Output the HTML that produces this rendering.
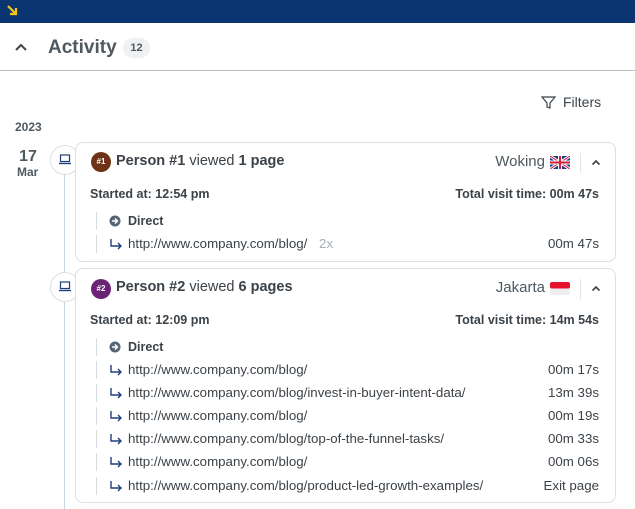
<!DOCTYPE html><html><head><style>
*{margin:0;padding:0;box-sizing:border-box}
body{width:635px;height:509px;overflow:hidden;background:#fff;font-family:"Liberation Sans",sans-serif;color:#3b4248;position:relative}
.a{position:absolute;white-space:nowrap}
.card{position:absolute;left:75px;width:541px;border:1px solid #dcdfe2;border-radius:8px;background:#fff;z-index:2}
.av{position:absolute;width:20px;height:20px;border-radius:50%;color:#fff;font-size:8px;font-weight:bold;text-align:center;line-height:20px}
.dev{position:absolute;left:50px;width:30px;height:30px;border-radius:50%;border:1px solid #dcdfe2;background:#fff;z-index:1}
.row{position:absolute;left:20px;right:16px;height:18px;font-size:13.3px;line-height:18px}
.row .bar{position:absolute;left:0;top:0;width:1px;height:18px;background:#d9dcdf}
.row .ic{position:absolute;left:13px;top:0}
.row .t{position:absolute;left:32px;color:#3b4248}
.row .r{position:absolute;right:0;color:#3b4248}
</style></head><body>
<div class="a" style="left:0;top:0;width:635px;height:23px;background:#0a3570"></div>
<svg class="a" style="left:6px;top:4px" width="13" height="13" viewBox="0 0 13 13"><path d="M2 2L10 10M4 10H10V4" stroke="#f5c518" stroke-width="2.2" fill="none"/></svg>
<svg class="a" style="left:14px;top:42px" width="14" height="10" viewBox="0 0 14 10"><path d="M2 8L7 3L12 8" stroke="#3b4248" stroke-width="2" fill="none"/></svg>
<div class="a" style="left:48px;top:37px;font-size:19px;font-weight:bold;color:#4f5960">Activity</div>
<div class="a" style="left:123px;top:38px;width:27px;height:20px;border-radius:10px;background:#eef0f1;font-size:11px;font-weight:bold;text-align:center;line-height:20px;color:#4f5960">12</div>
<div class="a" style="left:0;top:70px;width:635px;height:1px;background:#b9c1c6"></div>
<svg class="a" style="left:541px;top:95px" width="15" height="15" viewBox="0 0 15 15"><path d="M1 2H14L9 8V13L6 12V8Z" stroke="#3b4248" stroke-width="1.2" fill="none"/></svg>
<div class="a" style="left:563px;top:94px;font-size:14px;color:#3b4248">Filters</div>
<div class="a" style="left:15px;top:120px;font-size:12px;font-weight:bold;color:#4f5960">2023</div>
<div class="a" style="left:17px;top:148px;font-size:16px;font-weight:bold;color:#4f5960;width:22px;text-align:center">17</div>
<div class="a" style="left:17px;top:165px;font-size:12px;font-weight:bold;color:#4f5960">Mar</div>
<div class="a" style="left:64px;top:160px;width:1px;height:349px;background:#c3d6e6"></div>
<div class="dev" style="top:145px"></div><div class="dev" style="top:272px"></div>
<svg class="a" style="left:58px;top:154px;z-index:3" width="14" height="11" viewBox="0 0 14 11"><rect x="2.5" y="1" width="9" height="6.5" fill="none" stroke="#1f3f7a" stroke-width="1.2"/><path d="M1 9.5H13" stroke="#1f3f7a" stroke-width="1.4"/></svg>
<svg class="a" style="left:58px;top:281px;z-index:3" width="14" height="11" viewBox="0 0 14 11"><rect x="2.5" y="1" width="9" height="6.5" fill="none" stroke="#1f3f7a" stroke-width="1.2"/><path d="M1 9.5H13" stroke="#1f3f7a" stroke-width="1.4"/></svg>

<div class="card" style="top:142px;height:120px">
<div class="av" style="left:15px;top:9px;background:#6d3314">#1</div>
<div class="a" style="left:40px;top:10px;font-size:14.5px"><b>Person #1</b> viewed <b>1 page</b></div>
<div class="a" style="right:70px;top:10px;font-size:15px;color:#4f5960">Woking</div>
<svg class="a" style="right:45px;top:13px" width="20" height="13" viewBox="0 0 20 13"><rect width="20" height="13" fill="#1a3c8a"/><path d="M0 0L20 13M20 0L0 13" stroke="#fff" stroke-width="3"/><path d="M0 0L20 13M20 0L0 13" stroke="#d21f3c" stroke-width="1"/><path d="M10 0V13M0 6.5H20" stroke="#fff" stroke-width="4"/><path d="M10 0V13M0 6.5H20" stroke="#d21f3c" stroke-width="2"/></svg>
<div class="a" style="right:34px;top:10px;width:1px;height:20px;background:#e3e5e7"></div>
<svg class="a" style="right:14px;top:16px" width="10" height="7" viewBox="0 0 10 7"><path d="M1.5 5.5L5 2L8.5 5.5" stroke="#3b4248" stroke-width="1.6" fill="none"/></svg>
<div class="a" style="left:14px;top:44px;font-size:12.5px;font-weight:bold">Started at: 12:54 pm</div>
<div class="a" style="right:16px;top:44px;font-size:12.5px;font-weight:bold">Total visit time: 00m 47s</div>
<div class="row" style="top:69px"><div class="bar"></div><svg class="a" style="left:13px;top:3px" width="12" height="12" viewBox="0 0 12 12"><circle cx="6" cy="6" r="5.5" fill="#566476"/><path d="M3 6H8M6 3.5L8.5 6L6 8.5" stroke="#fff" stroke-width="1.5" fill="none"/></svg><div class="t" style="font-weight:bold;font-size:12.5px">Direct</div></div>
<div class="row" style="top:92px"><div class="bar"></div><svg class="ic" width="14" height="18" viewBox="0 0 14 18"><path d="M2 4V11H12M9 8L12 11L9 14" stroke="#1f3f7a" stroke-width="1.4" fill="none"/></svg><div class="t">http://www.company.com/blog/ <span style="color:#a8aeb3;margin-left:8px">2x</span></div><div class="r">00m 47s</div></div>
</div>

<div class="card" style="top:268px;height:235px">
<div class="av" style="left:15px;top:10px;background:#6b2473">#2</div>
<div class="a" style="left:40px;top:10px;font-size:14.5px"><b>Person #2</b> viewed <b>6 pages</b></div>
<div class="a" style="right:70px;top:10px;font-size:15px;color:#4f5960">Jakarta</div>
<svg class="a" style="right:45px;top:13px" width="20" height="13" viewBox="0 0 20 13"><rect width="20" height="13" rx="2" fill="#eee"/><rect width="20" height="6.5" rx="2" fill="#e8112d"/></svg>
<div class="a" style="right:34px;top:10px;width:1px;height:20px;background:#e3e5e7"></div>
<svg class="a" style="right:14px;top:16px" width="10" height="7" viewBox="0 0 10 7"><path d="M1.5 5.5L5 2L8.5 5.5" stroke="#3b4248" stroke-width="1.6" fill="none"/></svg>
<div class="a" style="left:14px;top:44px;font-size:12.5px;font-weight:bold">Started at: 12:09 pm</div>
<div class="a" style="right:16px;top:44px;font-size:12.5px;font-weight:bold">Total visit time: 14m 54s</div>
<div class="row" style="top:69px"><div class="bar"></div><svg class="a" style="left:13px;top:3px" width="12" height="12" viewBox="0 0 12 12"><circle cx="6" cy="6" r="5.5" fill="#566476"/><path d="M3 6H8M6 3.5L8.5 6L6 8.5" stroke="#fff" stroke-width="1.5" fill="none"/></svg><div class="t" style="font-weight:bold;font-size:12.5px">Direct</div></div>
<div class="row" style="top:92px"><div class="bar"></div><svg class="ic" width="14" height="18" viewBox="0 0 14 18"><path d="M2 4V11H12M9 8L12 11L9 14" stroke="#1f3f7a" stroke-width="1.4" fill="none"/></svg><div class="t">http://www.company.com/blog/</div><div class="r">00m 17s</div></div>
<div class="row" style="top:115px"><div class="bar"></div><svg class="ic" width="14" height="18" viewBox="0 0 14 18"><path d="M2 4V11H12M9 8L12 11L9 14" stroke="#1f3f7a" stroke-width="1.4" fill="none"/></svg><div class="t">http://www.company.com/blog/invest-in-buyer-intent-data/</div><div class="r">13m 39s</div></div>
<div class="row" style="top:138px"><div class="bar"></div><svg class="ic" width="14" height="18" viewBox="0 0 14 18"><path d="M2 4V11H12M9 8L12 11L9 14" stroke="#1f3f7a" stroke-width="1.4" fill="none"/></svg><div class="t">http://www.company.com/blog/</div><div class="r">00m 19s</div></div>
<div class="row" style="top:161px"><div class="bar"></div><svg class="ic" width="14" height="18" viewBox="0 0 14 18"><path d="M2 4V11H12M9 8L12 11L9 14" stroke="#1f3f7a" stroke-width="1.4" fill="none"/></svg><div class="t">http://www.company.com/blog/top-of-the-funnel-tasks/</div><div class="r">00m 33s</div></div>
<div class="row" style="top:184px"><div class="bar"></div><svg class="ic" width="14" height="18" viewBox="0 0 14 18"><path d="M2 4V11H12M9 8L12 11L9 14" stroke="#1f3f7a" stroke-width="1.4" fill="none"/></svg><div class="t">http://www.company.com/blog/</div><div class="r">00m 06s</div></div>
<div class="row" style="top:208px"><div class="bar"></div><svg class="ic" width="14" height="18" viewBox="0 0 14 18"><path d="M2 4V11H12M9 8L12 11L9 14" stroke="#1f3f7a" stroke-width="1.4" fill="none"/></svg><div class="t">http://www.company.com/blog/product-led-growth-examples/</div><div class="r">Exit page</div></div>
</div>
</body></html>
